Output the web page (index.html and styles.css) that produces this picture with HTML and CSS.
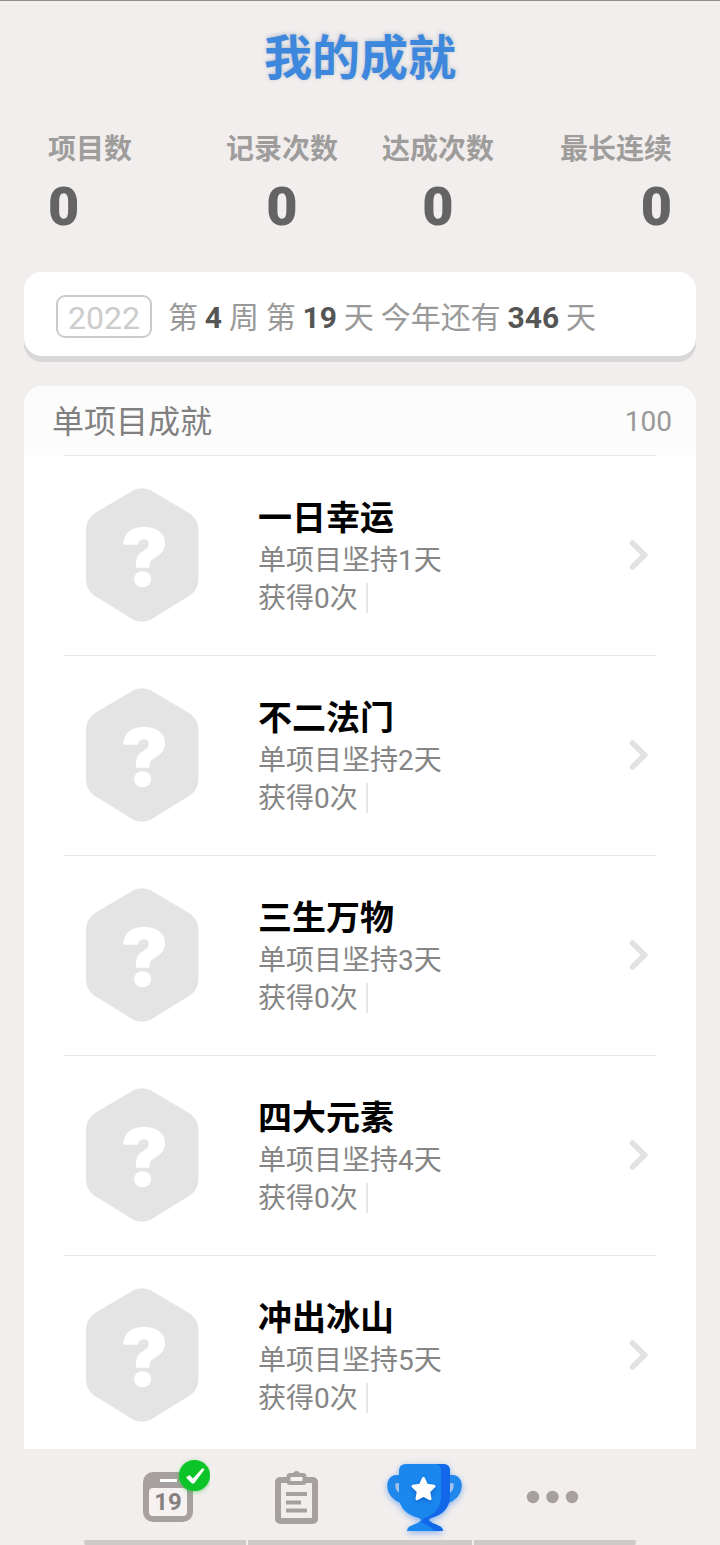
FILE: index.html
```html
<!DOCTYPE html>
<html lang="zh-CN">
<head>
    <meta charset="UTF-8">
    <meta name="viewport" content="width=device-width, initial-scale=1.0">
    <title>我的成就</title>
    <link rel="stylesheet" href="styles.css">
</head>
<body>
    <div class="app">
        <h1>我的成就</h1>

        <div class="stats">
            <div class="stat"><span>项目数</span><b>0</b></div>
            <div class="stat"><span>记录次数</span><b>0</b></div>
            <div class="stat"><span>达成次数</span><b>0</b></div>
            <div class="stat"><span>最长连续</span><b>0</b></div>
        </div>

        <div class="date-card">
            <span class="year">2022</span>
            <p>第 <b>4</b> 周 第 <b>19</b> 天 今年还有 <b>346</b> 天</p>
        </div>

        <div class="list">
            <div class="list-header">
                <h2>单项目成就</h2>
                <span>100</span>
            </div>
            <div id="achievements"></div>
        </div>

        <nav>
            <div class="tabs">
                <div class="tab">
                    <svg width="84" height="80" viewBox="0 0 84 80">
                        <rect x="17" y="23" width="50" height="50" rx="10" fill="#a6a1a0"/>
                        <rect x="23" y="39" width="38" height="28" rx="4" fill="#f5f2f1"/>
                        <rect x="34" y="30" width="17" height="3" fill="#fff"/>
                        <text x="42" y="61" text-anchor="middle" class="day">19</text>
                        <circle class="done" cx="68.5" cy="26.5" r="15.5" fill="#0bc427"/>
                        <path d="M60 28.500L63.500 26L67 29.500L76.500 19L78.500 20.500L68 34.500L66 34.500Z" fill="#fff"/>
                    </svg>
                </div>
                <div class="tab">
                    <svg width="84" height="80" viewBox="0 0 84 80">
                        <rect x="24" y="31" width="37" height="41" rx="2" fill="none" stroke="#a6a1a0" stroke-width="6"/>
                        <rect x="32.500" y="24" width="20" height="12" rx="3.500" fill="#a6a1a0"/>
                        <circle cx="42.500" cy="25.500" r="3.500" fill="#a6a1a0"/>
                        <rect x="36.500" y="28" width="12" height="4" fill="#f5f2f1"/>
                        <path d="M32 45h21M32 53.500h15M32 61.500h21" stroke="#a6a1a0" stroke-width="4"/>
                    </svg>
                </div>
                <div class="tab">
                    <svg class="cup" width="84" height="90" viewBox="0 0 84 90">
                        <path d="M18 30h-3.500c-4 0-6 4-5 9 1 6 5 9 11 11.500M67 30h3.500c4 0 6 4 5 9-1 6-5 9-11 11.500" fill="none" stroke="#2088ea" stroke-width="8"/>
                        <path d="M17 22q0-7 7-7h37q7 0 7 7v25c0 12-8 19-19 22q-4 2 0 4c3 3 12 3 12 9H25c0-6 9-6 12-9q4-2 0-4C25 66 17 59 17 47Z" fill="#1a87ee"/>
                        <path d="M54 15h7q7 0 7 7v25c0 12-8 19-19 22q-4 2 0 4c3 3 12 3 12 9h-9c-2-4-8-6-13-9l3-4c11-3 17-11 17-22V22q0-6-5-7Z" fill="#1268e8"/>
                        <path class="star" d="M41.500 29.500l3.200 6.800 7.300 1-5.300 5.200 1.300 7.300-6.500-3.500-6.500 3.500 1.300-7.300-5.300-5.200 7.300-1z" fill="#fff" stroke="#fff" stroke-width="3" stroke-linejoin="round"/>
                    </svg>
                </div>
                <div class="tab">
                    <svg width="84" height="80" viewBox="0 0 84 80" fill="#a6a1a0">
                        <circle cx="23" cy="48" r="6.200"/>
                        <circle cx="42.500" cy="48" r="6.200"/>
                        <circle cx="62" cy="48" r="6.200"/>
                    </svg>
                </div>
            </div>
            <div class="bars"><i></i><i></i><i></i></div>
        </nav>
    </div>

    <script>
        const names = ["一日幸运", "不二法门", "三生万物", "四大元素", "冲出冰山"];

        names.forEach((name, i) => {
            let row = document.createElement("div");
            row.classList.add("row");
            row.innerHTML = `
                <svg class="badge" width="114" height="136" viewBox="0 0 114 136">
                    <path d="M48 3.500Q57-1 66 3.500L104 26Q113.500 32 113.500 43V92Q113.500 103 104 109L66 132.500Q57 137 48 132.500L10 109Q1 103 1 92V43Q1 32 10 26Z" fill="#e4e4e4"/>
                    <text x="59.500" y="98.500" text-anchor="middle" class="mark">?</text>
                </svg>
                <div class="info">
                    <h3>${name}</h3>
                    <p>单项目坚持${i + 1}天</p>
                    <p class="count">获得0次</p>
                </div>
                <svg class="arrow" width="20" height="34" viewBox="0 0 20 34">
                    <path d="M3.500 5L15.500 17L3.500 29" fill="none" stroke="#e2e2e2" stroke-width="5.500" stroke-linecap="round"/>
                </svg>`;
            document.getElementById("achievements").appendChild(row);
        });
    </script>
</body>
</html>
```
FILE: styles.css
```css
* {
    box-sizing: border-box;
}
body {
    margin: 0;
    background: #f2eeed;
    font-family: Roboto, "Noto Sans CJK SC", sans-serif;
}
h1, h2, h3, p {
    margin: 0;
    font-weight: normal;
}
.app {
    display: flex;
    flex-direction: column;
    height: 1545px;
    overflow: hidden;
    border-top: 1px solid #938c8b;
}
h1 {
    margin-top: 26px;
    text-align: center;
    font-size: 48px;
    line-height: 64px;
    font-weight: bold;
    color: #3d87dc;
    text-shadow: 0 -1px 4px rgba(60, 100, 150, 0.35);
}
.stats {
    display: grid;
    grid-template-columns: repeat(4, 1fr);
    margin: 39px 48px 0;
    text-align: center;
}
.stat {
    display: flex;
    flex-direction: column;
    font-weight: bold;
}
.stat:first-child {
    text-align: left;
}
.stat:last-child {
    text-align: right;
}
.stat span {
    font-size: 28px;
    line-height: 40px;
    color: #9e9d9c;
}
.stat b {
    font-size: 54px;
    line-height: 64px;
    margin-top: 5px;
    color: #646464;
}
.date-card {
    display: flex;
    align-items: center;
    gap: 16px;
    height: 84px;
    flex-shrink: 0;
    margin: 33px 24px 0;
    padding: 5px 32px 0;
    background: #fff;
    border-radius: 18px;
    box-shadow: 0 6px 0 #d8d8d8;
    font-size: 30px;
    line-height: 40px;
    color: #999;
}
.date-card p {
    margin-top: 2px;
    white-space: nowrap;
    word-spacing: -0.6px;
}
.date-card b {
    color: #555;
}
.year {
    width: 96px;
    height: 43px;
    border: 2px solid #ccc;
    border-radius: 9px;
    text-align: center;
    font-size: 32px;
    line-height: 42px;
    color: #ccc;
}
.list {
    flex: 1;
    min-height: 0;
    overflow: hidden;
    margin: 30px 24px 0;
    background: #fff;
    border-radius: 18px 18px 0 0;
}
.list-header {
    display: flex;
    justify-content: space-between;
    align-items: center;
    height: 69px;
    padding: 0 24px 0 28px;
    background: #fcfcfc;
    color: #808080;
}
.list-header h2 {
    margin-top: -3px;
    font-size: 32px;
}
.list-header span {
    margin-top: 2px;
    font-size: 28px;
    color: #999;
}
.row {
    display: flex;
    height: 200px;
    margin: 0 40px;
    padding: 31px 7px 0 21px;
    border-top: 1px solid #e8e8e8;
}
.mark {
    font: 900 80px Inter, sans-serif;
    fill: #fff;
}
.info {
    flex: 1;
    margin: 10px 0 0 59px;
    font-size: 28px;
    line-height: 38px;
    color: #858585;
}
.info h3 {
    margin-bottom: 3px;
    font-size: 34px;
    line-height: 42px;
    font-weight: bold;
    color: #000;
}
.count::after {
    content: "";
    display: inline-block;
    width: 2px;
    height: 30px;
    margin-left: 8px;
    vertical-align: -5px;
    background: #e6e6e6;
}
.arrow {
    margin-top: 51px;
}
nav {
    display: flex;
    flex-direction: column;
    justify-content: space-between;
    height: 96px;
    flex-shrink: 0;
}
.tabs {
    display: flex;
    justify-content: center;
    height: 91px;
}
.tab {
    width: 128px;
    text-align: center;
}
.day {
    font: bold 24px Roboto, sans-serif;
    fill: #858180;
}
.done {
    filter: drop-shadow(0 1px 2px rgba(11, 196, 39, 0.5));
}
.cup {
    filter: drop-shadow(0 2px 3px rgba(26, 120, 238, 0.5));
}
.star {
    filter: drop-shadow(0 2px 2px rgba(10, 70, 180, 0.5));
}
.bars {
    display: flex;
    justify-content: center;
    gap: 2px;
    height: 5px;
}
.bars i {
    width: 162px;
    background: #cdcac8;
    border-radius: 2px 0 0 2px;
}
.bars i:nth-child(2) {
    width: 224px;
    border-radius: 0;
}
.bars i:last-child {
    border-radius: 0 2px 2px 0;
}
```
